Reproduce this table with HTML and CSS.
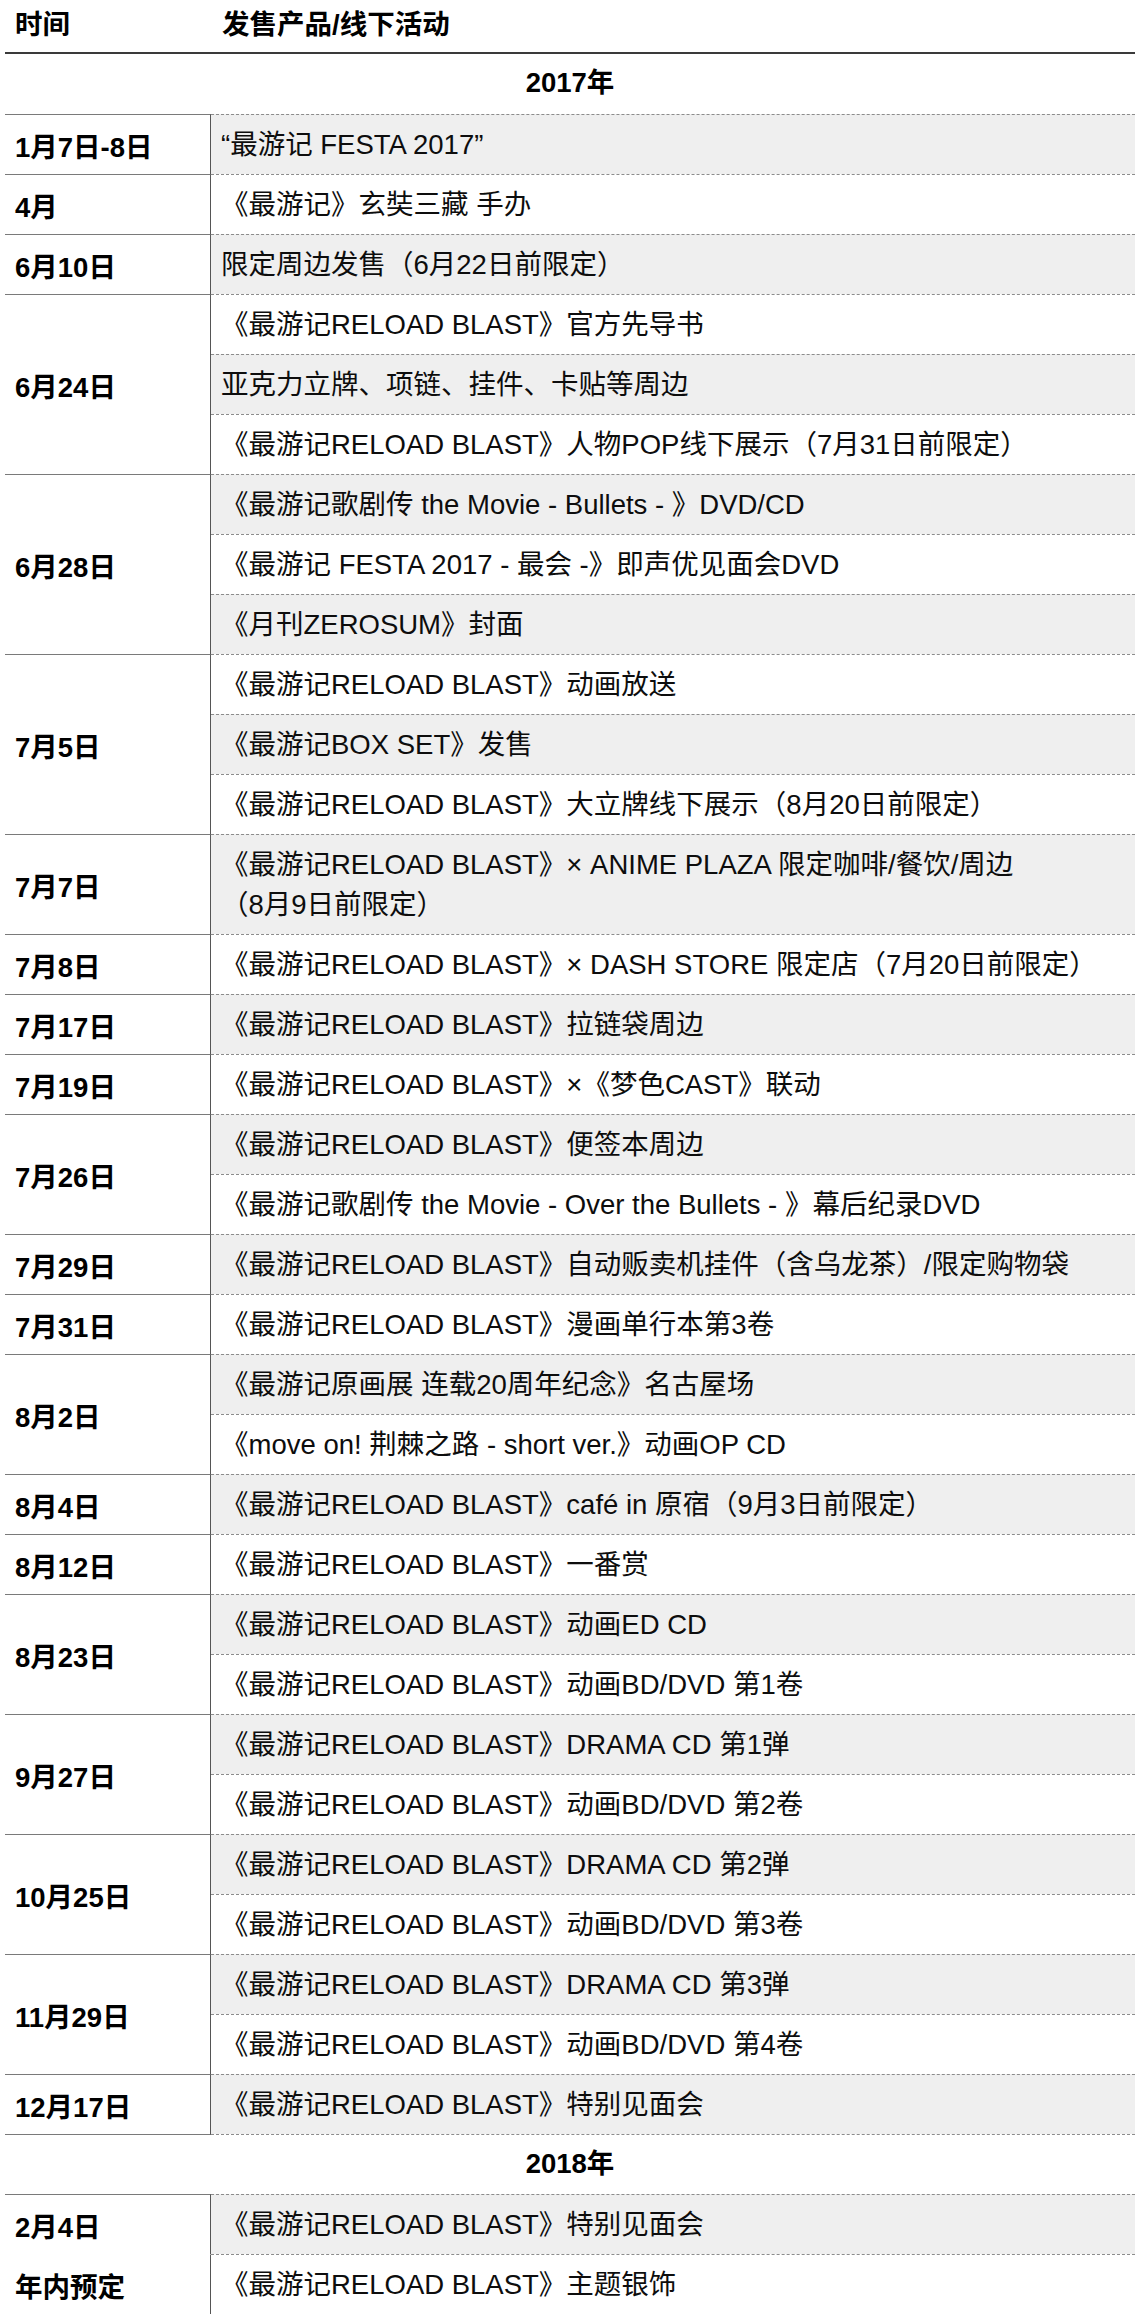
FILE: index.html
```html
<!DOCTYPE html>
<html lang="zh-CN">
<head>
<meta charset="utf-8">
<title>最游记 2017-2018</title>
<link rel="stylesheet" href="styles.css">
</head>
<body>
<div class="table">
  <div class="head"><div class="c1">时间</div><div class="c2">发售产品/线下活动</div></div>

  <div class="year">2017年</div>

  <div class="group"><div class="date">1月7日-8日</div><div class="items"><div class="item alt">“最游记 FESTA 2017”</div></div></div>
  <div class="group"><div class="date">4月</div><div class="items"><div class="item">《最游记》玄奘三藏 手办</div></div></div>
  <div class="group"><div class="date">6月10日</div><div class="items"><div class="item alt">限定周边发售（6月22日前限定）</div></div></div>
  <div class="group"><div class="date">6月24日</div><div class="items">
    <div class="item">《最游记RELOAD BLAST》官方先导书</div>
    <div class="item alt">亚克力立牌、项链、挂件、卡贴等周边</div>
    <div class="item">《最游记RELOAD BLAST》人物POP线下展示（7月31日前限定）</div>
  </div></div>
  <div class="group"><div class="date">6月28日</div><div class="items">
    <div class="item alt">《最游记歌剧传 the Movie - Bullets - 》DVD/CD</div>
    <div class="item">《最游记 FESTA 2017 - 最会 -》即声优见面会DVD</div>
    <div class="item alt">《月刊ZEROSUM》封面</div>
  </div></div>
  <div class="group"><div class="date">7月5日</div><div class="items">
    <div class="item">《最游记RELOAD BLAST》动画放送</div>
    <div class="item alt">《最游记BOX SET》发售</div>
    <div class="item">《最游记RELOAD BLAST》大立牌线下展示（8月20日前限定）</div>
  </div></div>
  <div class="group"><div class="date">7月7日</div><div class="items"><div class="item alt">《最游记RELOAD BLAST》× ANIME PLAZA 限定咖啡/餐饮/周边<span class="nowrap">（8月9日前限定）</span></div></div></div>
  <div class="group"><div class="date">7月8日</div><div class="items"><div class="item">《最游记RELOAD BLAST》× DASH STORE 限定店（7月20日前限定）</div></div></div>
  <div class="group"><div class="date">7月17日</div><div class="items"><div class="item alt">《最游记RELOAD BLAST》拉链袋周边</div></div></div>
  <div class="group"><div class="date">7月19日</div><div class="items"><div class="item">《最游记RELOAD BLAST》×《梦色CAST》联动</div></div></div>
  <div class="group"><div class="date">7月26日</div><div class="items">
    <div class="item alt">《最游记RELOAD BLAST》便签本周边</div>
    <div class="item">《最游记歌剧传 the Movie - Over the Bullets - 》幕后纪录DVD</div>
  </div></div>
  <div class="group"><div class="date">7月29日</div><div class="items"><div class="item alt">《最游记RELOAD BLAST》自动贩卖机挂件（含乌龙茶）/限定购物袋</div></div></div>
  <div class="group"><div class="date">7月31日</div><div class="items"><div class="item">《最游记RELOAD BLAST》漫画单行本第3卷</div></div></div>
  <div class="group"><div class="date">8月2日</div><div class="items">
    <div class="item alt">《最游记原画展 连载20周年纪念》名古屋场</div>
    <div class="item">《move on! 荆棘之路 - short ver.》动画OP CD</div>
  </div></div>
  <div class="group"><div class="date">8月4日</div><div class="items"><div class="item alt">《最游记RELOAD BLAST》café in 原宿（9月3日前限定）</div></div></div>
  <div class="group"><div class="date">8月12日</div><div class="items"><div class="item">《最游记RELOAD BLAST》一番赏</div></div></div>
  <div class="group"><div class="date">8月23日</div><div class="items">
    <div class="item alt">《最游记RELOAD BLAST》动画ED CD</div>
    <div class="item">《最游记RELOAD BLAST》动画BD/DVD 第1卷</div>
  </div></div>
  <div class="group"><div class="date">9月27日</div><div class="items">
    <div class="item alt">《最游记RELOAD BLAST》DRAMA CD 第1弹</div>
    <div class="item">《最游记RELOAD BLAST》动画BD/DVD 第2卷</div>
  </div></div>
  <div class="group"><div class="date">10月25日</div><div class="items">
    <div class="item alt">《最游记RELOAD BLAST》DRAMA CD 第2弹</div>
    <div class="item">《最游记RELOAD BLAST》动画BD/DVD 第3卷</div>
  </div></div>
  <div class="group"><div class="date">11月29日</div><div class="items">
    <div class="item alt">《最游记RELOAD BLAST》DRAMA CD 第3弹</div>
    <div class="item">《最游记RELOAD BLAST》动画BD/DVD 第4卷</div>
  </div></div>
  <div class="group last"><div class="date">12月17日</div><div class="items"><div class="item alt">《最游记RELOAD BLAST》特别见面会</div></div></div>

  <div class="year year-next">2018年</div>

  <div class="group"><div class="date">2月4日</div><div class="items"><div class="item alt">《最游记RELOAD BLAST》特别见面会</div></div></div>
  <div class="group cont"><div class="date">年内预定</div><div class="items"><div class="item">《最游记RELOAD BLAST》主题银饰</div></div></div>
</div>
</body>
</html>
```

FILE: styles.css
```css
html, body {
  margin: 0;
  padding: 0;
  background: #fff;
}

body {
  font-family: "Liberation Sans", "Noto Sans CJK SC", sans-serif;
  font-size: 27.5px;
  color: #0d0d0d;
}

.table {
  margin-left: 5px;
  width: 1130px;
}

.head {
  display: flex;
  font-weight: bold;
  color: #000;
  line-height: 40px;
  padding: 5px 0 7px;
  border-bottom: 2px solid #3a3a3a;
}

.head .c1 {
  width: 196px;
  padding-left: 10px;
}

.head .c2 {
  padding-left: 11px;
}

.year {
  text-align: center;
  font-weight: bold;
  color: #000;
  line-height: 40px;
  padding: 9px 0 11px;
}

.year-next {
  padding-bottom: 10px;
}

.group {
  display: flex;
}

.date {
  width: 195px;
  padding-left: 10px;
  display: flex;
  align-items: center;
  font-weight: bold;
  color: #000;
  border-top: 1px solid #7a7a7a;
  border-right: 1px solid #555;
}

.group.cont .date {
  border-top-color: transparent;
}

.items {
  flex: 1;
  min-width: 0;
}

.item {
  border-top: 1px dashed #8c8c8c;
  padding: 10px 10px 9px;
  line-height: 40px;
}

.item.alt {
  background: #efefef;
}

.nowrap {
  white-space: nowrap;
}

.group.last .date {
  border-bottom: 1px solid #7a7a7a;
}

.group.last .items {
  border-bottom: 1px dashed #8c8c8c;
}
```
